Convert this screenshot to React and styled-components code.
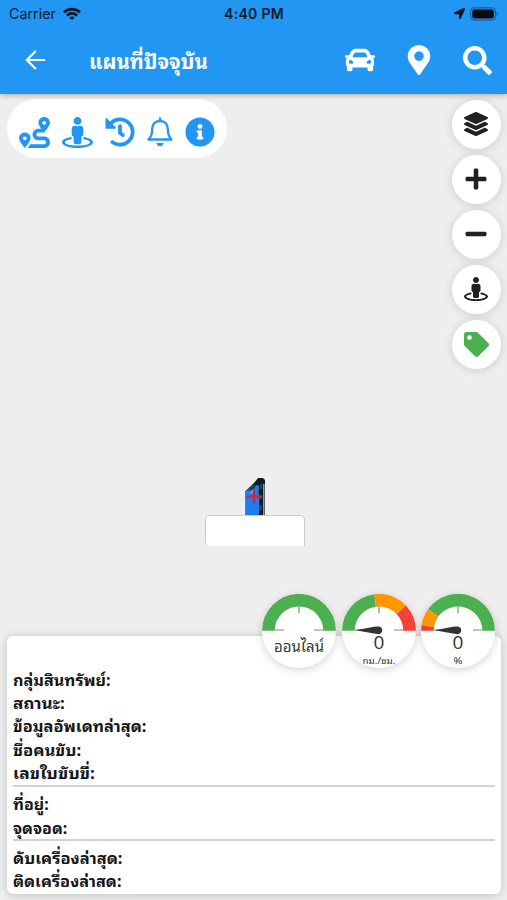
import React from "react";
import styled, { createGlobalStyle } from "styled-components";
import {
  FaCar,
  FaMapMarkerAlt,
  FaSearch,
  FaRoute,
  FaStreetView,
  FaHistory,
  FaInfoCircle,
  FaLayerGroup,
  FaPlus,
  FaMinus,
  FaTag,
  FaLocationArrow,
} from "react-icons/fa";

const BLUE = "#2196f3";
const GREEN = "#4caf50";
const ORANGE = "#ff9800";
const RED = "#f44336";
const THAI = `"Noto Sans Thai Looped", "Loma", "Garuda", "Waree", "Norasi", "Noto Serif Thai", "Liberation Sans", sans-serif`;

const GlobalStyle = createGlobalStyle`
  * { box-sizing: border-box; }
  body { margin: 0; background: #eeeeee; }
  svg { display: block; flex: none; }
`;

const Screen = styled.div`
  display: flex;
  flex-direction: column;
  width: 507px;
  height: 900px;
  overflow: hidden;
  background: #eeeeee;
  font-family: ${THAI};
  color: #151515;
`;

const Header = styled.header`
  position: relative;
  z-index: 1;
  height: 94px;
  flex: none;
  background: ${BLUE};
  box-shadow: 0 1px 6px rgba(0, 0, 0, 0.3);
`;

const StatusBar = styled.div`
  display: grid;
  grid-template-columns: 1fr auto 1fr;
  align-items: center;
  height: 27px;
  padding: 0 8px 0 9px;
  font: 500 14px/27px "Inter", sans-serif;
  color: #0b1a28;
`;

const StatusGroup = styled.div`
  display: flex;
  align-items: center;
  gap: ${(p) => p.$gap}px;
  justify-content: ${(p) => (p.$end ? "flex-end" : "flex-start")};
  font-weight: 400;
  font-size: 14.3px;
`;

const Clock = styled.div`
  font-weight: 600;
  letter-spacing: 0.3px;
`;

const AppBar = styled.div`
  display: flex;
  align-items: center;
  height: 66px;
  padding: 0 15px 0 25px;
  color: #fff;
`;

const Title = styled.h1`
  flex: 1;
  margin: 0 0 0 43px;
  font-size: 20px;
  line-height: 30px;
  font-weight: 700;
  white-space: nowrap;
`;

const Actions = styled.div`
  display: flex;
  align-items: center;
  gap: 29px;
`;

const MapArea = styled.main`
  position: relative;
  flex: 1;
`;

const Overlay = styled.div`
  display: flex;
  justify-content: space-between;
  align-items: flex-start;
  padding: 5px 6px 0 7px;
`;

const Pill = styled.nav`
  display: flex;
  align-items: center;
  width: 220px;
  height: 59px;
  padding: 7px 12px 0;
  gap: 12px;
  border-radius: 30px;
  background: #fff;
  color: ${BLUE};
`;

const Controls = styled.div`
  display: flex;
  flex-direction: column;
  gap: 6px;
  padding-top: 1px;
`;

const RoundButton = styled.button`
  display: flex;
  align-items: center;
  justify-content: center;
  width: 49px;
  height: 49px;
  padding: 0 1px 1px 0;
  border: 0;
  border-radius: 50%;
  background: #fff;
  color: ${(p) => p.$color || "#212121"};
  box-shadow: 0 1px 10px rgba(0, 0, 0, 0.15);
`;

const Marker = styled.div`
  position: absolute;
  left: 205px;
  top: 384px;
  width: 100px;
  display: flex;
  flex-direction: column;
  align-items: center;
`;

const MarkerLabel = styled.div`
  width: 100px;
  height: 32px;
  margin-top: -1px;
  border: 1px solid #ccc;
  border-bottom-color: #eee;
  border-radius: 5px 5px 2px 5px;
  background: #fff;
`;

const Card = styled.section`
  position: absolute;
  left: 7px;
  top: 542px;
  width: 494px;
  height: 258px;
  padding: 32px 6px 0;
  border-radius: 6px;
  background: #fff;
  box-shadow: 0 1px 10px rgba(0, 0, 0, 0.2);
`;

const GaugeRow = styled.div`
  position: absolute;
  left: 262px;
  top: 500px;
  display: flex;
  gap: 5.5px;
`;

const GaugeFace = styled.div`
  width: 74px;
  height: 74px;
  border-radius: 50%;
  background: #fff;
  box-shadow: 0 2px 9px rgba(0, 0, 0, 0.17);
`;

const Group = styled.div`
  padding: ${(p) => p.$pad};
  border-top: ${(p) => (p.$line ? "2px solid #d2d2d2" : "0")};
`;

const Field = styled.div`
  height: 23.2px;
  font-size: 16px;
  line-height: 23.2px;
  font-weight: 700;
  white-space: nowrap;
`;

const FieldText = styled.span`
  display: inline-block;
  transform: scaleX(${(p) => p.$stretch || 1});
  transform-origin: left center;
`;

const WifiIcon = () => (
  <svg width="18" height="14" viewBox="0 0 19 14" fill="none" stroke="#081420" strokeWidth="2.8">
    <path d="M1 5.2C5.8.7 13.2.7 18 5.2" />
    <path d="M4.2 8.5c3-2.8 7.6-2.8 10.6 0" />
    <path d="M9.5 13.4 6.7 10.6c1.6-1.4 4-1.4 5.6 0Z" fill="#081420" stroke="none" />
  </svg>
);

const BatteryIcon = () => (
  <svg width="29" height="14" viewBox="0 0 30 14">
    <rect x=".7" y=".7" width="25.6" height="12.6" rx="3.6" fill="none" stroke="#16629e" strokeWidth="1.2" />
    <rect x="2.4" y="2.4" width="22.2" height="9.2" rx="2" fill="#050b12" />
    <path d="M27.6 4.8c1.8.6 1.8 3.8 0 4.4Z" fill="#16629e" />
  </svg>
);

const BackIcon = () => (
  <svg width="21" height="20" viewBox="0 0 21 20" fill="none" stroke="#fff" strokeWidth="2.2">
    <path d="M20.2 10H2M10.8 1 1.8 10l9 9" />
  </svg>
);

const BellIcon = () => (
  <svg width="26" height="30" viewBox="0 0 26 30" fill="none" stroke={BLUE} strokeWidth="2.3" strokeLinejoin="round" strokeLinecap="round">
    <path d="M13 1.500v2M13 4c-5.200 0-7.800 3.700-7.800 8 0 5.800-1.400 7.600-3.700 10.500h23c-2.300-2.900-3.700-4.700-3.700-10.500 0-4.300-2.600-8-7.800-8Z" />
    <path d="M9.400 26h7.200c-.5 2.200-1.800 3.300-3.600 3.300s-3.100-1.100-3.600-3.300Z" fill={BLUE} stroke="none" />
  </svg>
);

const CarMarker = () => (
  <svg width="22" height="38" viewBox="0 0 22 38">
    <path d="M1.500 38V13l9-8.500L14 0h5l2 2v36Z" fill="#101b26" />
    <path d="M1.500 38V13.500L9 7l6 .5-.5 6.500 1 5-.5 6 .5 6-1 7Z" fill="#1d7fee" />
    <path d="M4 13 9.500 6.500l2.500 1L9 12Z" fill="#1b3a58" />
    <path d="M5 15.500 9 11l2 4.500Z" fill="#7298cf" />
    <path d="M19.800 6v31" stroke="#a3a99f" strokeWidth="1.400" />
    <path d="M17 6v5M17 17v4M17 27v5" stroke="#265d88" strokeWidth="1.300" />
    <path d="M2.500 18.500h15.500M10 11.500v14" stroke="#e01830" strokeWidth="2.200" />
  </svg>
);

const point = (fraction, radius) => {
  const angle = Math.PI * (1 - fraction);
  return `${37 + radius * Math.cos(angle)} ${36.8 - radius * Math.sin(angle)}`;
};

const GaugeText = styled.text`
  font-family: ${(p) => (p.$thai ? THAI : `"Open Sans", sans-serif`)};
  font-size: ${(p) => p.$size}px;
  fill: #333;
  text-anchor: middle;
`;

function Gauge({ bands, value, unit, unitWidth, status }) {
  return (
    <GaugeFace>
      <svg width="74" height="74" viewBox="0 0 74 74">
        {bands.map(([from, to, color]) => (
          <path
            key={from}
            d={`M${point(from, 30.6)}A30.6 30.6 0 0 1 ${point(to, 30.6)}`}
            fill="none"
            stroke={color}
            strokeWidth="12.6"
          />
        ))}
        <path d="M37 12.500v7M13 36h9M52 36h9" stroke="#888" strokeWidth="1.200" />
        {status ? (
          <GaugeText $thai x="37" y="57.500" $size={15} textLength="50" lengthAdjust="spacingAndGlyphs">{status}</GaugeText>
        ) : (
          <>
            <path d="M13.500 36.300 32 32.800l3.500-.3a3.900 3.900 0 1 1 0 7.600l-3.500-.5Z" fill="#333" />
            <GaugeText x="37" y="54.500" $size={19}>{value}</GaugeText>
            <GaugeText $thai x="37" y="70" $size={9} textLength={unitWidth} lengthAdjust="spacingAndGlyphs">{unit}</GaugeText>
          </>
        )}
      </svg>
    </GaugeFace>
  );
}

const groups = [
  {
    pad: "0 0 1.500px",
    fields: [
      ["กลุ่มสินทรัพย์:", 1.01],
      ["สถานะ:", 1.07],
      ["ข้อมูลอัพเดทล่าสุด:", 1.023],
      ["ชื่อคนขับ:", 1.045],
      ["เลขใบขับขี่:", 1.08],
    ],
  },
  { pad: "5px 0 0", line: true, fields: [["ที่อยู่:", 1], ["จุดจอด:", 1]] },
  { pad: "5px 0 0", line: true, fields: [["ดับเครื่องล่าสุด:", 1.03], ["ติดเครื่องล่าสด:", 1.02]] },
];

export default function App() {
  return (
    <Screen>
      <GlobalStyle />
      <Header>
        <StatusBar>
          <StatusGroup $gap={7}>
            Carrier
            <WifiIcon />
          </StatusGroup>
          <Clock>4:40 PM</Clock>
          <StatusGroup $end $gap={5}>
            <FaLocationArrow size={11} color="#081420" />
            <BatteryIcon />
          </StatusGroup>
        </StatusBar>
        <AppBar>
          <BackIcon />
          <Title>
            <FieldText $stretch={1.02}>แผนที่ปัจจุบัน</FieldText>
          </Title>
          <Actions>
            <FaCar size={30} />
            <FaMapMarkerAlt size={30} />
            <FaSearch size={29} />
          </Actions>
        </AppBar>
      </Header>
      <MapArea>
        <Overlay>
          <Pill>
            <FaRoute size={31} />
            <FaStreetView size={31} />
            <FaHistory size={30} />
            <BellIcon />
            <FaInfoCircle size={30} />
          </Pill>
          <Controls>
            <RoundButton><FaLayerGroup size={24} /></RoundButton>
            <RoundButton><FaPlus size={24} /></RoundButton>
            <RoundButton><FaMinus size={24} /></RoundButton>
            <RoundButton><FaStreetView size={24} /></RoundButton>
            <RoundButton $color={GREEN}><FaTag size={25} /></RoundButton>
          </Controls>
        </Overlay>
        <Marker>
          <CarMarker />
          <MarkerLabel />
        </Marker>
        <Card>
          {groups.map((group, i) => (
            <Group key={i} $pad={group.pad} $line={group.line}>
              {group.fields.map(([label, stretch]) => (
                <Field key={label}>
                  <FieldText $stretch={stretch}>{label}</FieldText>
                </Field>
              ))}
            </Group>
          ))}
        </Card>
        <GaugeRow>
          <Gauge status="ออนไลน์" bands={[[0, 1, GREEN]]} />
          <Gauge value="0" unit="กม./ชม." unitWidth="33" bands={[[0, 0.46, GREEN], [0.46, 0.76, ORANGE], [0.76, 1, RED]]} />
          <Gauge value="0" unit="%" unitWidth="9" bands={[[0, 0.05, RED], [0.05, 0.2, ORANGE], [0.2, 1, GREEN]]} />
        </GaugeRow>
      </MapArea>
    </Screen>
  );
}
